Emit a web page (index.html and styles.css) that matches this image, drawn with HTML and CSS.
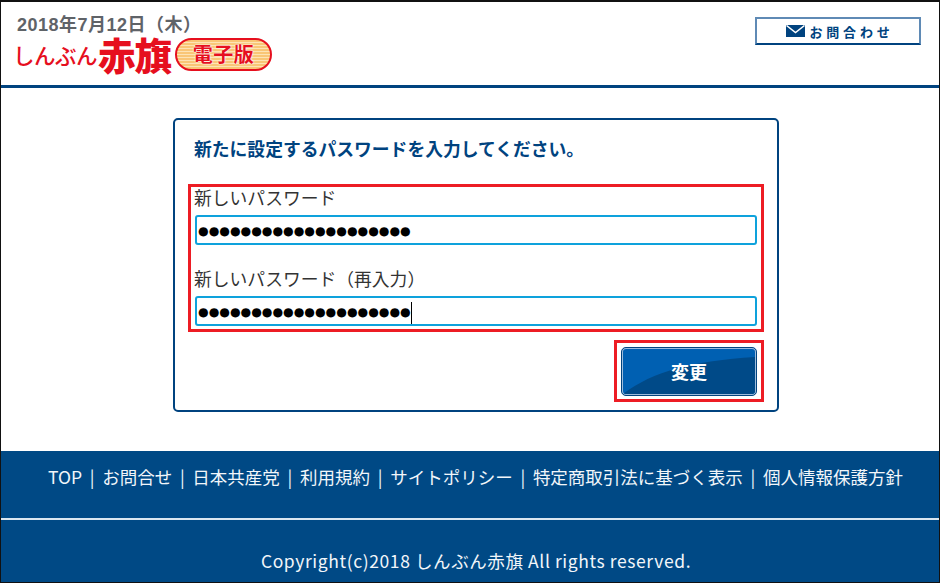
FILE: index.html
```html
<!DOCTYPE html>
<html lang="ja">
  <head>
    <meta charset="UTF-8" />
    <meta name="viewport" content="width=device-width, initial-scale=1.0" />
    <title>パスワード変更</title>
    <link rel="stylesheet" href="styles.css">
  </head>
  <body>
    <div class="page">
      <header class="site-header">
        <div class="brand">
          <div class="date">2018年7月12日（木）</div>
          <div class="logo">
            <span class="logo-kana">しんぶん</span>
            <span class="logo-kanji">赤旗</span>
            <span class="logo-pill">電子版</span>
          </div>
        </div>
        <a class="contact" href="#">
          <svg class="mail-icon" width="19" height="12" viewBox="0 0 19 12">
            <rect width="19" height="12" fill="#00437f" />
            <path d="M0.5 0.5 L9.5 7.5 L18.5 0.5" fill="none" stroke="#fff" stroke-width="1.5" />
          </svg>
          <span>お問合わせ</span>
        </a>
      </header>

      <main class="content">
        <form class="card">
          <h2 class="card-title">新たに設定するパスワードを入力してください。</h2>

          <div class="fields mark">
            <div class="field">
              <label>新しいパスワード</label>
              <div class="pw-input">●●●●●●●●●●●●●●●●●●●●</div>
            </div>
            <div class="field">
              <label>新しいパスワード（再入力）</label>
              <div class="pw-input">●●●●●●●●●●●●●●●●●●●●<span class="caret"></span></div>
            </div>
          </div>

          <div class="actions">
            <div class="mark button-mark">
              <button type="submit" class="submit">
                <svg class="submit-shade" viewBox="0 0 132 45" preserveAspectRatio="none">
                  <path d="M0 45 C30 22 70 12 132 8 L132 45 Z" fill="#004a88" />
                </svg>
                <span>変更</span>
              </button>
            </div>
          </div>
        </form>
      </main>

      <footer class="site-footer">
        <nav class="footer-nav">
          <a href="#">TOP</a> | <a href="#">お問合せ</a> | <a href="#">日本共産党</a> | <a href="#">利用規約</a> | <a href="#">サイトポリシー</a> | <a href="#">特定商取引法に基づく表示</a> | <a href="#">個人情報保護方針</a>
        </nav>
        <div class="copyright">Copyright(c)2018 しんぶん赤旗 All rights reserved.</div>
      </footer>
    </div>
  </body>
</html>
```

FILE: styles.css
```css
* {
  box-sizing: border-box;
}

body {
  margin: 0;
  padding: 0;
  background-color: white;
  font-family: "Noto Sans CJK JP", "Noto Sans", sans-serif;
}

.page {
  height: 583px;
  border: 1px solid #111;
  border-top-width: 2px;
  display: flex;
  flex-direction: column;
  overflow: hidden;
}

.site-header {
  height: 86px;
  flex: none;
  border-bottom: 3px solid #00437f;
  padding: 13px 18px 0 14px;
  display: flex;
  justify-content: space-between;
  align-items: flex-start;
}

.date {
  font-family: "Liberation Sans", "Noto Sans CJK JP", sans-serif;
  font-size: 18px;
  font-weight: bold;
  line-height: 20px;
  letter-spacing: 0.5px;
  color: #5f6368;
  margin-left: 2px;
}

.logo {
  display: flex;
  align-items: center;
  height: 38px;
  margin-left: -2px;
  color: #e60f1e;
  font-weight: bold;
}

.logo-kana {
  font-size: 21.5px;
  font-weight: 500;
  letter-spacing: -0.5px;
}

.logo-kanji {
  font-size: 37.5px;
  font-weight: 900;
  letter-spacing: -1px;
  line-height: 38px;
  margin-left: 1px;
}

.logo-pill {
  margin-left: 4px;
  width: 97px;
  height: 33px;
  border: 2px solid #e60f1e;
  border-radius: 17px;
  background: repeating-linear-gradient(#f9c676 0, #f9c676 2px, #fde3b5 2px, #fde3b5 3px);
  text-align: center;
  font-size: 20px;
  line-height: 27px;
  letter-spacing: 0.5px;
  text-shadow: 0 0 2px white, 0 0 2px white;
}

.contact {
  margin-top: 2px;
  width: 166px;
  height: 28px;
  padding-left: 4px;
  border: 2px solid #00437f;
  border-top-color: #5f8ab5;
  border-left-color: #5f8ab5;
  border-right-color: #5f8ab5;
  color: #00437f;
  text-decoration: none;
  font-size: 13px;
  font-weight: bold;
  letter-spacing: 3.8px;
  display: flex;
  align-items: center;
  justify-content: center;
  gap: 4px;
}

.content {
  flex: 1;
  padding-top: 30px;
}

.card {
  width: 606px;
  height: 294px;
  margin-left: 172px;
  border: 2px solid #00437f;
  border-radius: 5px;
  padding: 16px 13px 0 13px;
}

.card-title {
  margin: 0 0 24px 6px;
  font-size: 17.8px;
  font-weight: bold;
  line-height: 24px;
  color: #00437f;
}

.mark {
  border: 3px solid #ed1c24;
}

.fields {
  height: 148px;
  padding: 0 4px;
}

.field label {
  display: block;
  font-size: 17.8px;
  line-height: 24px;
  margin-top: -2px;
  margin-left: -1px;
  color: #333;
}

.field + .field {
  margin-top: 23px;
}

.pw-input {
  height: 30px;
  margin-top: 6px;
  border: 2px solid #0ea2dc;
  border-radius: 3px;
  padding-left: 1px;
  font-family: "DejaVu Sans", sans-serif;
  font-size: 12.2px;
  line-height: 29px;
  color: black;
  white-space: nowrap;
  overflow: hidden;
}

.caret {
  display: inline-block;
  width: 1px;
  height: 22px;
  background-color: black;
  vertical-align: middle;
}

.actions {
  display: flex;
  justify-content: flex-end;
  margin-top: 8px;
}

.button-mark {
  width: 150px;
  height: 62px;
  padding: 4px 4px;
  display: flex;
  align-items: center;
  justify-content: center;
}

.submit {
  position: relative;
  width: 136px;
  height: 49px;
  padding: 0;
  border: 2px solid #9dbcdc;
  border-radius: 5px;
  outline: 1px solid #00437f;
  outline-offset: -1px;
  background-color: #0060b2;
  color: white;
  font-family: inherit;
  font-size: 18px;
  font-weight: bold;
  overflow: hidden;
  cursor: pointer;
}

.submit-shade {
  position: absolute;
  left: 0;
  top: 0;
  width: 100%;
  height: 100%;
}

.submit span {
  position: relative;
}

.site-footer {
  height: 131px;
  flex: none;
  background-color: #004985;
  color: #f2f6fa;
  font-size: 17.5px;
}

.footer-nav {
  height: 69px;
  padding-top: 13px;
  padding-left: 11px;
  line-height: 26px;
  text-align: center;
  border-bottom: 2px solid #dbe6f0;
  white-space: nowrap;
  word-spacing: 3.8px;
}

.footer-nav a {
  color: #f2f6fa;
  text-decoration: none;
}

.copyright {
  padding-top: 28px;
  padding-left: 12px;
  line-height: 26px;
  text-align: center;
  letter-spacing: 0.6px;
}
```
